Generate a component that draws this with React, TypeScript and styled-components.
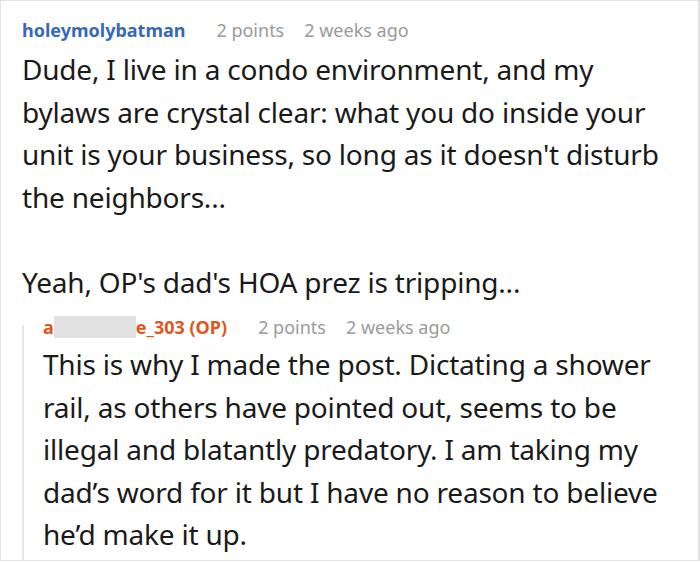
import React from "react";
import styled, { createGlobalStyle } from "styled-components";

const Global = createGlobalStyle`
  html, body { margin: 0; padding: 0; background: #fff; }
  body { font-family: "Noto Sans", "Open Sans", sans-serif; }
`;

const Frame = styled.div`
  box-sizing: border-box;
  width: 700px;
  height: 561px;
  border: 1px solid #e3e3e3;
  border-right-width: 2px;
  padding: 16px 20px 0 21px;
  overflow: hidden;
`;

const Comment = styled.div`
  display: flex;
  flex-direction: column;
`;

const Meta = styled.div`
  display: flex;
  align-items: baseline;
  gap: 31px;
  font-size: 18px;
  line-height: 26px;
`;

const Author = styled.span<{ $op?: boolean }>`
  font-weight: 700;
  color: ${(p) => (p.$op ? "#e2561d" : "#3768b8")};
  display: inline-flex;
  align-items: center;
`;

const Redact = styled.span`
  display: inline-block;
  width: 82px;
  height: 22px;
  background: #e2e2e2;
`;

const Info = styled.span`
  color: #9a9a9a;
  font-weight: 400;
`;

const InfoGroup = styled.span`
  display: inline-flex;
  gap: 20px;
`;

const Body = styled.div<{ $top: number }>`
  font-size: 28px;
  line-height: 42.5px;
  letter-spacing: -0.2px;
  color: #1a1a1a;
  margin-top: ${(p) => p.$top}px;
`;

const Para = styled.p`
  margin: 0 0 42.5px 0;
  &:last-child { margin-bottom: 0; }
`;

const Reply = styled.div`
  position: relative;
  margin-top: 11px;
  padding-left: 21px;
  &::before {
    content: "";
    position: absolute;
    left: 0;
    top: 11px;
    bottom: -8px;
    width: 2px;
    background: #e6e6e6;
  }
`;

export default function App() {
  return (
    <>
      <Global />
      <Frame>
        <Comment>
          <Meta>
            <Author>holeymolybatman</Author>
            <InfoGroup>
              <Info>2 points</Info>
              <Info>2 weeks ago</Info>
            </InfoGroup>
          </Meta>
          <Body $top={5}>
            <Para>
              Dude, I live in a condo environment, and my bylaws are crystal clear: what you do inside your unit is your business, so long as it doesn't disturb the neighbors...
            </Para>
            <Para>Yeah, OP's dad's HOA prez is tripping...</Para>
          </Body>
          <Reply>
            <Meta>
              <Author $op>
                a<Redact />e_303 (OP)
              </Author>
              <InfoGroup>
                <Info>2 points</Info>
                <Info>2 weeks ago</Info>
              </InfoGroup>
            </Meta>
            <Body $top={3}>
              <Para>
                This is why I made the post. Dictating a shower rail, as others have pointed out, seems to be illegal and blatantly predatory. I am taking my dad’s word for it but I have no reason to believe he’d make it up.
              </Para>
            </Body>
          </Reply>
        </Comment>
      </Frame>
    </>
  );
}
